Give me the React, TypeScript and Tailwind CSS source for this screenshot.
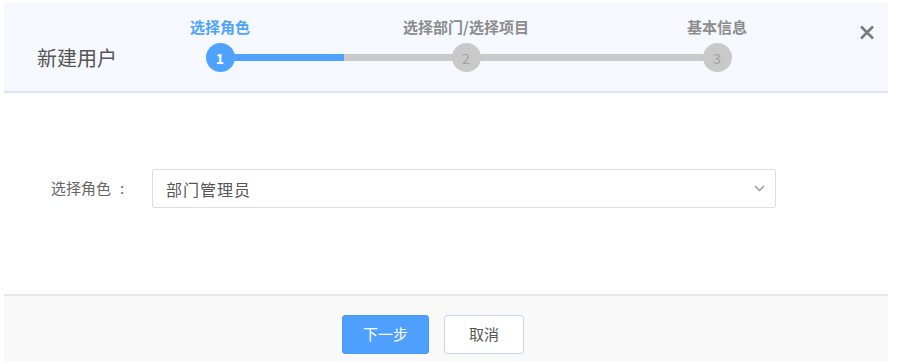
import React from "react";

const font = { fontFamily: '"Noto Sans CJK SC", "Noto Sans", sans-serif' };

function Step({ n, label, active, className = "" }: { n: number; label: string; active?: boolean; className?: string }) {
  return (
    <div className={`relative z-10 flex w-[100px] flex-col items-center ${className}`}>
      <div className={`h-[20px] text-[15px] font-bold leading-[20px] whitespace-nowrap ${active ? "text-[#4fa3ff]" : "text-[#8c8c8c]"}`}>
        {label}
      </div>
      <div
        className={`mt-[6px] flex h-[29px] w-[29px] items-center justify-center rounded-full text-[14px] leading-none ${
          active ? "bg-[#4fa3ff] font-bold text-white" : "bg-[#c9c9c9] text-[#a0a0a0]"
        }`}
      >
        {n}
      </div>
    </div>
  );
}

export default function App() {
  return (
    <div className="min-h-[362px] bg-white pl-[4px] pt-[3px]" style={font}>
      <div className="w-[884px]">
        {/* Header */}
        <div className="flex h-[90px] items-start border-b-2 border-[#dbe5f7] bg-[#f5f8fe]">
          <div className="w-[166px] pl-[33px] pt-[42px] text-[20px] leading-[26px] text-[#555555]">新建用户</div>
          <div className="relative flex pt-[14px]">
            <div className="absolute left-[50px] top-[51px] h-[7px] w-[497px] bg-[#c9c9c9]" />
            <div className="absolute left-[50px] top-[51px] h-[7px] w-[124px] bg-[#4fa3ff]" />
            <Step n={1} label="选择角色" active />
            <Step n={2} label="选择部门/选择项目" className="ml-[146px]" />
            <Step n={3} label="基本信息" className="ml-[151px]" />
          </div>
          <button className="ml-auto mr-[12px] mt-[21px] flex h-[16px] w-[18px] items-center justify-center">
            <svg width="16" height="15" viewBox="0 0 16 15">
              <path d="M2 1.5 L14 13.5 M14 1.5 L2 13.5" stroke="#7a7a7a" strokeWidth="2.6" strokeLinecap="butt" />
            </svg>
          </button>
        </div>

        {/* Body */}
        <div className="flex h-[201px] items-start bg-white pl-[47px] pt-[76px]">
          <div className="flex h-[39px] w-[101px] items-center text-[15px] text-[#666666]">
            <span>选择角色</span>
            <span className="ml-[9px]">:</span>
          </div>
          <div className="flex h-[39px] w-[624px] items-center justify-between rounded-[2px] border border-[#dedede] bg-white pl-[13px] pr-[10px]">
            <span className="text-[16px] tracking-[1px] text-[#555555]">部门管理员</span>
            <svg width="11" height="7" viewBox="0 0 11 7">
              <path d="M1 1 L5.5 5.5 L10 1" fill="none" stroke="#9a9a9a" strokeWidth="1.5" />
            </svg>
          </div>
        </div>

        {/* Footer */}
        <div className="flex h-[67px] items-start border-t-2 border-[#e8e8e8] bg-[#f9f9f9] pl-[338px] pt-[19px]">
          <button className="flex h-[39px] w-[87px] items-center justify-center rounded-[3px] border border-[#4a97f5] bg-[#4f9fff] text-[15px] text-white">
            下一步
          </button>
          <button className="ml-[15px] flex h-[39px] w-[80px] items-center justify-center rounded-[3px] border border-[#c9d6ee] bg-white text-[15px] text-[#555555]">
            取消
          </button>
        </div>
      </div>
    </div>
  );
}
